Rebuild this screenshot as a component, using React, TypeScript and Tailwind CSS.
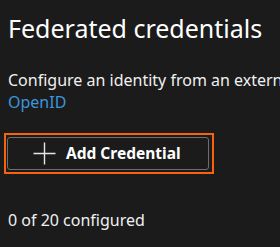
export default function App() {
  return (
    <div
      className="w-[280px] h-[247px] overflow-hidden bg-[#1b1b1b] text-white"
      style={{ fontFamily: '"Noto Sans", "Open Sans", sans-serif' }}
    >
      <div className="pl-2 pt-[13px]">
        <h1 className="text-[25px] leading-[30px] font-normal whitespace-nowrap">
          Federated credentials
        </h1>
        <p className="mt-[26px] text-[16px] leading-[22px] text-[#f0f0f0] whitespace-nowrap">
          Configure an identity from an external provider
        </p>
        <a className="block text-[16px] leading-[22px] text-[#3a96dd] w-fit">OpenID</a>
        <div className="mt-[20px] -ml-1 w-fit border-2 border-[#f7630c] pt-[2px] pb-[2px] pl-[1px] pr-[3px]">
          <button className="flex items-center h-[33px] w-[202px] pl-[25px] gap-[10px] rounded-[3px] border border-[#6e6e6e] bg-[#1b1b1b] text-[15.5px] font-bold text-white">
            <svg width="23" height="23" viewBox="0 0 23 23" fill="none">
              <path d="M11.5 0.5v22M0.5 11.5h22" stroke="#e6e6e6" strokeWidth="1.4" />
            </svg>
            Add Credential
          </button>
        </div>
        <p className="mt-[35px] text-[16px] leading-[22px] text-[#f0f0f0]">0 of 20 configured</p>
      </div>
    </div>
  );
}
